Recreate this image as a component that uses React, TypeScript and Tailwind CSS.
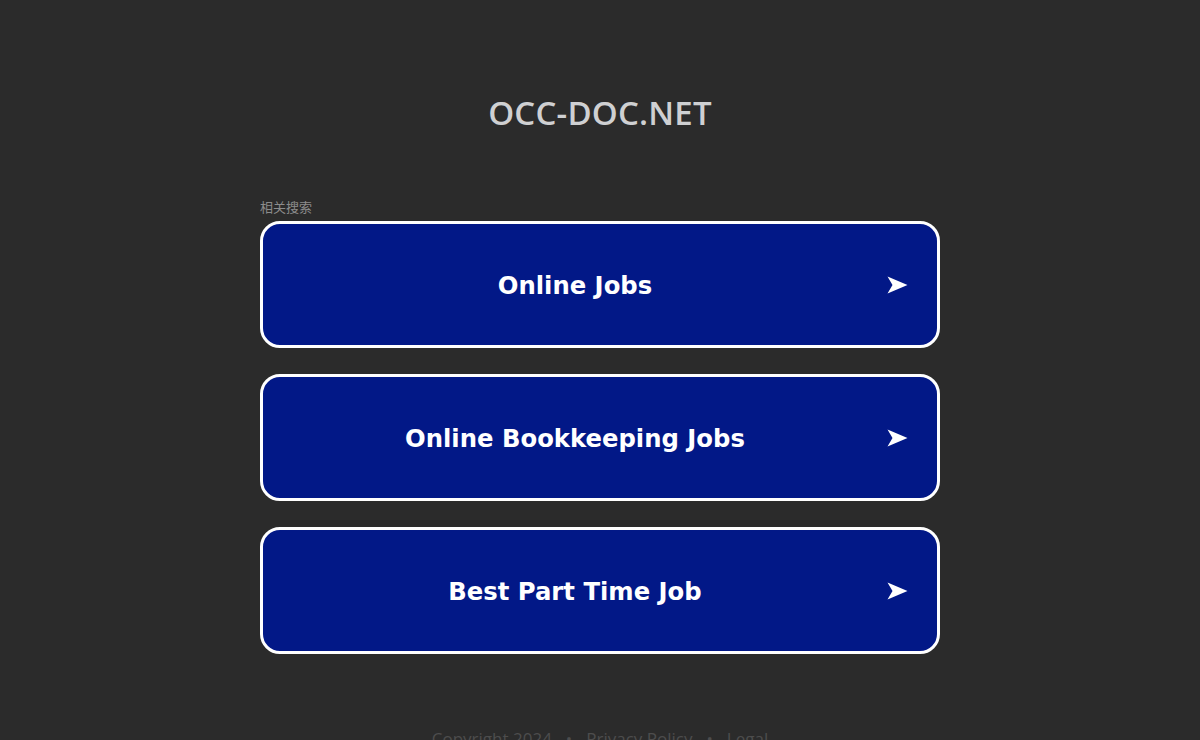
import React from "react";

const items = ["Online Jobs", "Online Bookkeeping Jobs", "Best Part Time Job"];

export default function App() {
  return (
    <div className="w-full bg-[#2b2b2b] flex flex-col items-center overflow-hidden h-[740px]">
      <div
        className="mt-[91px] h-[44px] text-[33px] leading-[44px] font-semibold text-[#cfd0d2] tracking-[0.2px]"
        style={{ fontFamily: '"Open Sans", sans-serif' }}
      >
        OCC-DOC.NET
      </div>
      <div className="mt-[63px] w-[680px]">
        <div
          className="text-[13px] leading-[18px] text-[#8c8c8c] h-[18px]"
          style={{ fontFamily: '"Noto Sans CJK SC", sans-serif' }}
        >
          相关搜索
        </div>
        <div className="mt-[5px] flex flex-col gap-[26px]">
          {items.map((t) => (
            <div
              key={t}
              className="h-[127px] rounded-[20px] border-[3px] border-white bg-[#021887] flex items-center"
            >
              <div
                className="flex-1 text-center text-white font-bold text-[24.3px] leading-[30px] pt-[2px]"
                style={{ fontFamily: '"DejaVu Sans", Verdana, sans-serif' }}
              >
                {t}
              </div>
              <svg width="21" height="18" viewBox="0 0 21 18" className="mr-[29px]">
                <path d="M0.5 0.5 L20.5 9 L0.5 17.5 L5.5 9 Z" fill="white" />
              </svg>
            </div>
          ))}
        </div>
      </div>
      <div
        className="mt-[75px] text-[17px] leading-[20px] text-[#4d4d4d] flex gap-[14px] shrink-0"
        style={{ fontFamily: '"Open Sans", sans-serif' }}
      >
        <span>Copyright 2024</span>
        <span>•</span>
        <span>Privacy Policy</span>
        <span>•</span>
        <span>Legal</span>
      </div>
    </div>
  );
}
